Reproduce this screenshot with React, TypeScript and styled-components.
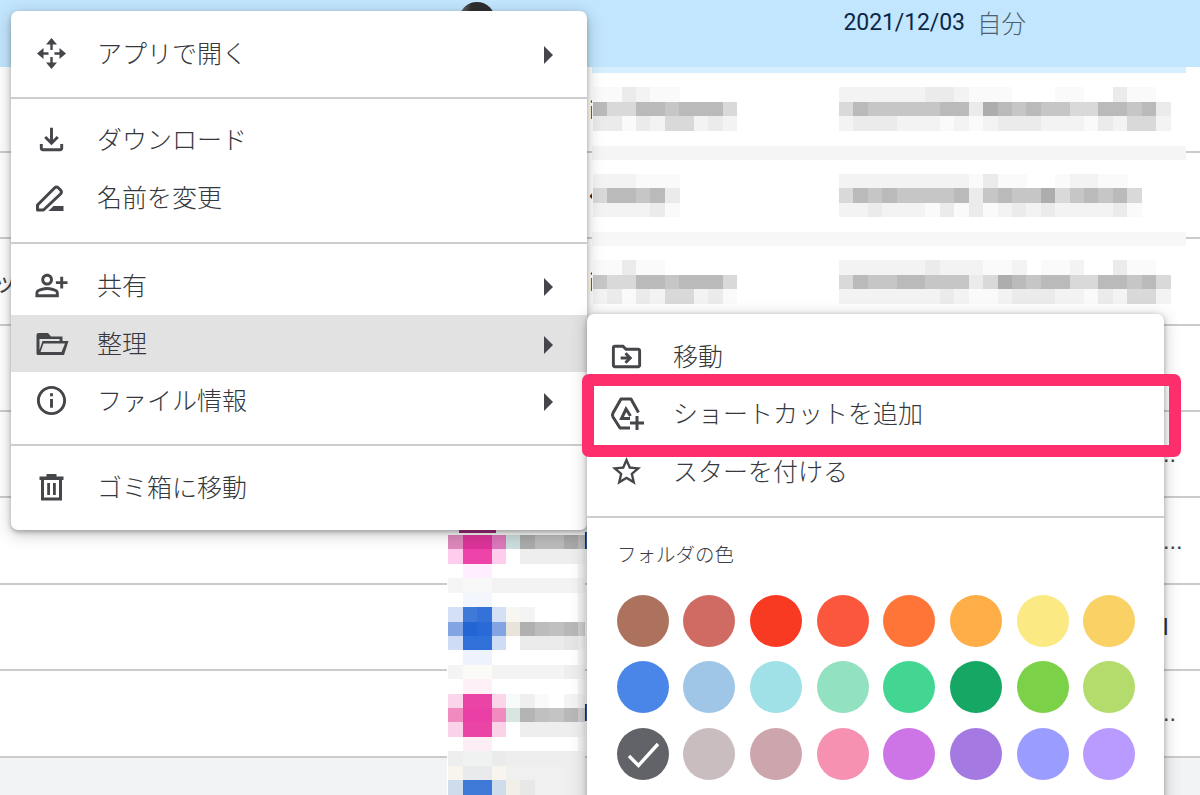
import styled, { createGlobalStyle } from "styled-components";
import type { ReactNode } from "react";
import {
  MdOutlineFileDownload,
  MdOutlinePersonAddAlt,
  MdInfoOutline,
  MdOutlineDriveFileMove,
  MdStarBorder,
} from "react-icons/md";

const GlobalStyle = createGlobalStyle`
  html, body {
    margin: 0;
    padding: 0;
    background: #fff;
  }
  * {
    box-sizing: border-box;
  }
`;

const font = `"Noto Sans CJK JP", "Noto Sans", sans-serif`;

const Page = styled.div`
  position: relative;
  display: flex;
  flex-direction: column;
  width: 1200px;
  height: 795px;
  overflow: hidden;
  font-family: ${font};
  color: #3c4043;
`;

const HeaderRow = styled.div`
  display: flex;
  flex: none;
  height: 66.5px;
  padding: 2px 0 0 459px;
  background: #c2e6fd;
`;
const Avatar = styled.div`
  flex: none;
  width: 36px;
  height: 36px;
  border-radius: 50%;
  background: linear-gradient(90deg, #77777a 0, #2c2c2e 35%);
`;
const DateCell = styled.div`
  display: flex;
  align-items: center;
  gap: 12px;
  height: 40px;
  margin-left: 348.5px;
`;
const DateText = styled.span`
  font-family: Roboto, sans-serif;
  font-size: 23px;
  letter-spacing: -0.1px;
  color: #0c2748;
`;
const Owner = styled.span`
  font-size: 24.5px;
  font-weight: 300;
  color: #50606e;
`;

const Row = styled.div`
  display: grid;
  flex: none;
  grid-template-columns: 585px 580px 1fr;
  align-items: center;
  height: 86.4px;
  border-bottom: 2px solid #cbcbcb;
  font-size: 24px;
  line-height: 30px;
  white-space: nowrap;
`;
const Name = styled.span`
  margin-left: -7px;
`;
const Snippet = styled.span<{ $inset: number }>`
  padding-left: ${(p) => p.$inset}px;
  color: #26282b;
`;
const More = styled.span`
  margin-left: -1px;
  padding-top: 6px;
  font-family: "Liberation Sans", sans-serif;
  font-size: 16px;
  font-weight: 700;
  letter-spacing: 2px;
`;
const Edge = styled.span`
  margin-left: -2px;
  font-family: "Liberation Sans", sans-serif;
  color: #26282b;
`;
const Footer = styled.div`
  flex: 1;
  background: #f1f3f4;
`;

const TopPatch = styled.svg`
  position: absolute;
  left: 591.5px;
  top: 66.5px;
  filter: blur(0.7px);
`;
const BottomPatch = styled.svg`
  position: absolute;
  left: 447px;
  top: 530px;
  filter: blur(0.5px);
`;

const Menu = styled.div`
  position: absolute;
  left: 11px;
  top: 11px;
  width: 576px;
  height: 519px;
  border-radius: 7px;
  background: #fff;
  box-shadow: 0 2px 4px rgba(40, 44, 48, 0.3), 0 4px 16px rgba(40, 44, 48, 0.28);
`;
const SubMenu = styled.div`
  position: absolute;
  left: 587px;
  top: 313.5px;
  width: 577px;
  height: 540px;
  border-radius: 7px;
  background: #fff;
  box-shadow: 0 1px 4px rgba(40, 44, 48, 0.3), 0 3px 16px rgba(40, 44, 48, 0.3);
`;
const Group = styled.div<{ $top: number; $bottom: number }>`
  padding: ${(p) => p.$top}px 0 ${(p) => p.$bottom}px;
  & + & {
    border-top: 2px solid #cdcdcd;
  }
`;
const Item = styled.div<{ $active?: boolean; $inset: number; $gap: number }>`
  display: flex;
  align-items: center;
  height: 57.5px;
  padding: 0 34px 0 ${(p) => p.$inset}px;
  gap: ${(p) => p.$gap}px;
  background: ${(p) => (p.$active ? "#e2e2e2" : "transparent")};
`;
const IconSlot = styled.span`
  display: flex;
  flex: none;
  width: 35px;
  height: 35px;
  color: #444649;
  svg {
    width: 35px;
    height: 35px;
  }
`;
const Label = styled.span`
  flex: 1;
  padding-bottom: 3px;
  font-size: 25px;
  font-weight: 300;
  line-height: 32px;
  color: #35383c;
`;
const Arrow = styled.i`
  flex: none;
  width: 0;
  height: 0;
  margin-top: 3px;
  border-top: 9px solid transparent;
  border-bottom: 9px solid transparent;
  border-left: 9px solid #444649;
`;

const ColorTitle = styled.div`
  padding: 23.5px 0 0 30px;
  font-size: 19.5px;
  font-weight: 300;
  line-height: 25px;
`;
const Palette = styled.div`
  display: grid;
  grid-template-columns: repeat(8, 52px);
  gap: 14.7px;
  padding: 28.5px 0 0 29.5px;
`;
const Swatch = styled.div<{ $color: string }>`
  display: flex;
  align-items: center;
  justify-content: center;
  width: 52px;
  height: 52px;
  border-radius: 50%;
  background: ${(p) => p.$color};
`;

const Highlight = styled.div`
  position: absolute;
  left: 582px;
  top: 373.5px;
  width: 599px;
  height: 83.5px;
  border: 12.5px solid #fe2e6c;
  border-radius: 7px;
`;

const OpenWithIcon = () => (
  <svg viewBox="0 0 35 35" fill="currentColor">
    <path d="M17.5 2L12 8.5H23ZM17.5 33L12 26.5H23ZM3 17.5L9.5 12V23ZM32 17.5L25.5 12V23Z" />
    <path d="M16.3 8h2.4v6h-2.4zM16.3 21h2.4v6h-2.4zM9 16.3h5.5v2.4H9zM20.5 16.3H26v2.4h-5.5z" />
  </svg>
);

const RenameIcon = () => (
  <svg viewBox="6.5 5 35 35" fill="none">
    <path
      d="M10 35V30L27 13Q29 11 31 13L33 15Q35 17 33 19L16 35Z"
      stroke="currentColor"
      strokeWidth="3"
      strokeLinejoin="round"
    />
    <path d="M21 36L26 31H36V36Z" fill="currentColor" />
  </svg>
);

const FolderOpenIcon = () => (
  <svg viewBox="0 0 35 35" fill="currentColor">
    <path
      fillRule="evenodd"
      d="M2.5 9Q2.5 7 4.5 7H14L17 10.5H28.5V15H34.5L30 29H4Q2.5 29 2.5 27.5ZM5.5 13H25.5V15H8.5L5.5 24ZM9.5 17.5H31L27.5 26H6.5Z"
    />
  </svg>
);

const TrashIcon = () => (
  <svg viewBox="0 0 35 35" fill="currentColor">
    <path d="M12.5 4h10v3h-10zM5.5 6.5h24V10h-24z" />
    <path d="M7 10h3v17.5h15V10h3v20.5H7z" />
    <path d="M13.2 13H16v12h-2.8zM19 13h2.8v12H19z" />
  </svg>
);

const ShortcutIcon = () => (
  <svg viewBox="5 5 35 35" fill="none" stroke="currentColor" strokeWidth="3">
    <path d="M34.5 21.5L27 8H17L9 22Q8 24 9 26L16 37H26" strokeLinejoin="round" />
    <path d="M26.5 25L22 18L17.5 27.5H26" />
    <path d="M33 25V39M26 32H40" />
  </svg>
);

const colors = [
  "#ac725e", "#d06b64", "#f83a22", "#fa573c", "#ff7537", "#ffad46", "#fbe983", "#fad165",
  "#4986e7", "#9fc6e7", "#9fe1e7", "#92e1c0", "#42d692", "#16a765", "#7bd148", "#b3dc6c",
  "#616368", "#cabdbf", "#cca6ac", "#f691b2", "#cd74e6", "#a47ae2", "#9a9cff", "#b99aff",
];

// mosaic tones, one letter per block
const tones: Record<string, string> = {
  a: "#adadad",
  b: "#bababa",
  c: "#c6c6c6",
  d: "#d9d9d9",
  e: "#ebebeb",
  f: "#f3f3f3",
  g: "#fafafa",
};
const CELL = 14.42;

const textBlocks: { x: number; y: number; rows: string[] }[] = [
  { x: 592.3, y: 86.7, rows: ["ggefgg", "bddbbcbbbd", "eegefddfef"] },
  { x: 592.3, y: 173.2, rows: ["fffggg", "dbbcbe", "ffffeg"] },
  { x: 592.3, y: 259.7, rows: ["ggegg", "cddbbcbbbd", "fegefddfeg"] },
  {
    x: 838.4,
    y: 86.7,
    rows: ["ffffffeefggg...gg..egg.", "dbcccccbbeabcbccddbbcbe", "feeefffgfgfeeefffgefddf"],
  },
  {
    x: 838.4,
    y: 173.2,
    rows: ["fffffffffgegg..gffgg", "dbcbccccbecbccadcbcbd", "ffefffgegegfefeffffeg"],
  },
  {
    x: 838.4,
    y: 259.7,
    rows: ["ffffffefffggf.ggf..egg.", "dbccbbcccedabcbbddbbcbd", "fffffffefggfeeeffgefddf"],
  },
];

const TopMosaic = () => (
  <TopPatch width="594" height="250" viewBox="591.5 66.5 594 250" shapeRendering="crispEdges">
    <rect x="591.5" y="66.5" width="594" height="250" fill="#fff" />
    <rect x="591.5" y="66.5" width="594" height="5.5" fill="#d6eefd" />
    <rect x="591.5" y="145" width="594" height="14.4" fill="#f5f5f5" />
    <rect x="591.5" y="231.5" width="594" height="14.4" fill="#f7f7f7" />
    {textBlocks.map((block) =>
      block.rows.map((row, r) =>
        row.split("").map((tone, c) =>
          tones[tone] ? (
            <rect
              key={`${block.x}-${block.y}-${r}-${c}`}
              x={block.x + c * CELL}
              y={block.y + r * CELL}
              width={CELL + 0.2}
              height={CELL + 0.2}
              fill={tones[tone]}
            />
          ) : null,
        ),
      ),
    )}
  </TopPatch>
);

// ten columns from x=448.3, one row per 14.42px from y=535
const bottomRows = [
  "d8b d39 d39 d7b cdd aaa bbb bbb aaa bbb",
  "fce e4a e4a fce fff eee eee eee eee eee",
  "fff fef fef fff fff fff fff fff fff f4f4f4",
  "f5f5f5 f8f8f8 f8f8f8 f3f3f3 f3f3f3 f3f3f3 f3f3f3 f3f3f3 f3f3f3 eee",
  "fff f3f6fc f3f6fc fff fff fff fff fff fff f4f4f4",
  "d3e0f6 3f7ad9 3272d9 d3e0f6 f8f6f0 f4f4f4 fff fff fff f4f4f4",
  "82a4e2 2465d6 2a6ad8 82a4e2 e8e4da b0b0b0 bcbcbc c0c0c0 b8b8b8 ccc",
  "cfdcf6 2f70d9 2f70d9 cfdcf6 fff ebebeb ebebeb ebebeb e6e6e6 eee",
  "fff eef2fc eef2fc fff fff fff fff fff fff f4f4f4",
  "f4f4f4 fafaf6 fafaf6 f3f3f3 f3f3f3 f3f3f3 f3f3f3 f3f3f3 eee eee",
  "fff fdf0f6 fdf0f6 fff fff fff fff fff fff f4f4f4",
  "fbd6ea ea45a6 ea45a6 fbd6ea f6faf8 efefef fafafa fff f4f4f4 eee",
  "f08abf ea3fa5 ea3fa5 f08abf d9e6df b4b4b4 c0c0c0 c4c4c4 b8b8b8 ccc",
  "fbd3e8 ea45a6 ea45a6 fbd3e8 fff eee eee eee eee efefef",
  "fff fdeef6 fdeef6 fff fff fff fff fff fff f4f4f4",
  "eee f0f1f1 f0f1f1 ebebeb eee eee eee eee eee eee",
  "f7f5ee e8eaec e8eaec f7f5ee f0f0f0 f0f0f0 f0f0f0 f0f0f0 eee eee",
  "cfdcec 3f79d8 3f79d8 cfdcec f1efe8 e8e8e8 f0f0f0 f0f0f0 eee eee",
];

const BottomMosaic = () => (
  <BottomPatch width="138" height="265" viewBox="447 530 138 265" shapeRendering="crispEdges">
    <rect x="447" y="530" width="138" height="265" fill="#fff" />
    <rect x="459" y="529" width="37" height="3.5" fill="#a31c72" />
    {bottomRows.map((row, r) =>
      row.split(" ").map((hex, c) => (
        <rect
          key={`${r}-${c}`}
          x={448.3 + c * CELL}
          y={535 + r * CELL}
          width={CELL + 0.2}
          height={CELL + 0.2}
          fill={`#${hex}`}
        />
      )),
    )}
  </BottomPatch>
);

type MenuEntry = { icon: ReactNode; label: string; arrow?: boolean; active?: boolean };

const mainGroups: { top: number; bottom: number; items: MenuEntry[] }[] = [
  { top: 14, bottom: 14.5, items: [{ icon: <OpenWithIcon />, label: "アプリで開く", arrow: true }] },
  {
    top: 12,
    bottom: 15.5,
    items: [
      { icon: <MdOutlineFileDownload />, label: "ダウンロード" },
      { icon: <RenameIcon />, label: "名前を変更" },
    ],
  },
  {
    top: 13.5,
    bottom: 14,
    items: [
      { icon: <MdOutlinePersonAddAlt />, label: "共有", arrow: true },
      { icon: <FolderOpenIcon />, label: "整理", arrow: true, active: true },
      { icon: <MdInfoOutline />, label: "ファイル情報", arrow: true },
    ],
  },
  { top: 13, bottom: 0, items: [{ icon: <TrashIcon />, label: "ゴミ箱に移動" }] },
];

const subItems: MenuEntry[] = [
  { icon: <MdOutlineDriveFileMove />, label: "移動" },
  { icon: <ShortcutIcon />, label: "ショートカットを追加" },
  { icon: <MdStarBorder />, label: "スターを付ける" },
];

const App = () => {
  return (
    <Page>
      <GlobalStyle />
      <HeaderRow>
        <Avatar />
        <DateCell>
          <DateText>2021/12/03</DateText>
          <Owner>自分</Owner>
        </DateCell>
      </HeaderRow>
      <Row>
        <span />
        <Snippet $inset={4}>i</Snippet>
      </Row>
      <Row>
        <span />
        <Snippet $inset={0}>く</Snippet>
      </Row>
      <Row>
        <Name>ッ</Name>
        <Snippet $inset={4}>i</Snippet>
      </Row>
      <Row>
        <span />
      </Row>
      <Row>
        <span />
        <span />
        <More>..</More>
      </Row>
      <Row>
        <span />
        <Edge>l</Edge>
        <More>...</More>
      </Row>
      <Row>
        <span />
        <span />
        <Edge>l</Edge>
      </Row>
      <Row>
        <span />
        <Edge>l</Edge>
        <More>..</More>
      </Row>
      <Footer />

      <TopMosaic />
      <BottomMosaic />

      <Menu>
        {mainGroups.map((group) => (
          <Group key={group.items[0].label} $top={group.top} $bottom={group.bottom}>
            {group.items.map((item) => (
              <Item key={item.label} $active={item.active} $inset={22.5} $gap={28.5}>
                <IconSlot>{item.icon}</IconSlot>
                <Label>{item.label}</Label>
                {item.arrow && <Arrow />}
              </Item>
            ))}
          </Group>
        ))}
      </Menu>

      <SubMenu>
        <Group $top={14} $bottom={15.5}>
          {subItems.map((item) => (
            <Item key={item.label} $inset={21.5} $gap={29.5}>
              <IconSlot>{item.icon}</IconSlot>
              <Label>{item.label}</Label>
            </Item>
          ))}
        </Group>
        <Group $top={0} $bottom={0}>
          <ColorTitle>フォルダの色</ColorTitle>
          <Palette>
            {colors.map((color, i) => (
              <Swatch key={color} $color={color}>
                {i === 16 && (
                  <svg width="36" height="36" viewBox="0 0 36 36" fill="none">
                    <path d="M4 20L13.5 29.5L33 8" stroke="#fff" strokeWidth="3.4" />
                  </svg>
                )}
              </Swatch>
            ))}
          </Palette>
        </Group>
      </SubMenu>

      <Highlight />
    </Page>
  );
};

export default App;
